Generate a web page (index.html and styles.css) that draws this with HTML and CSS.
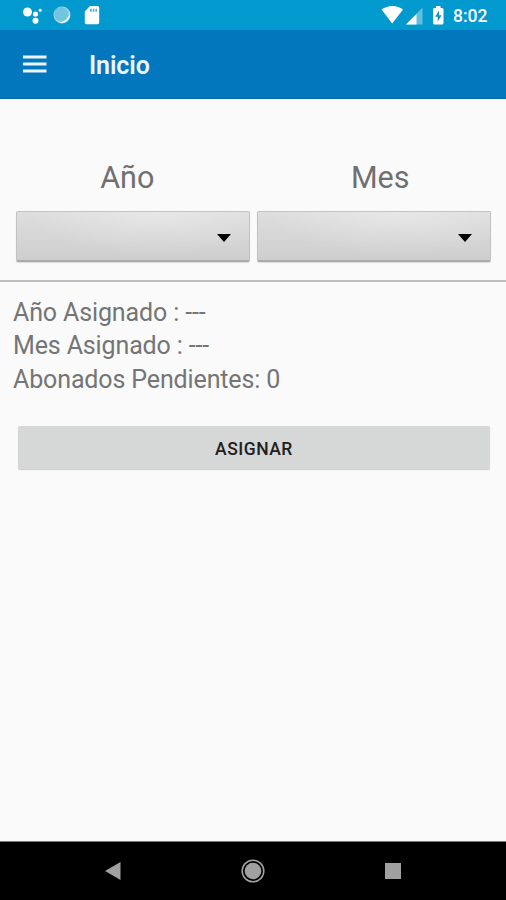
FILE: index.html
```html
<!DOCTYPE html>
<html lang="es">
<head>
<meta charset="utf-8">
<title>Inicio</title>
<link rel="stylesheet" href="styles.css">
</head>
<body>
<div class="screen">
  <header class="status">
    <svg class="status-left" width="84" height="30" viewBox="0 0 84 30" fill="#fff">
      <circle cx="7.500" cy="12" r="4.500"/><circle cx="15.500" cy="14" r="2.600"/><circle cx="20.200" cy="10.200" r="1.500"/><circle cx="15.500" cy="20.700" r="3"/>
      <circle cx="42" cy="15" r="8.500" fill="#a3d9eb"/>
      <circle cx="41.300" cy="14.200" r="7.200" fill="#72c5e0"/>
      <path d="M49.800 14a8.500 8.500 0 0 1-11 8.800Q47 21.500 49.800 14z" fill="#f0fafd"/>
      <path d="M70 6H77.500a1.700 1.700 0 0 1 1.700 1.700V22.500a1.700 1.700 0 0 1-1.700 1.700H66.500a1.700 1.700 0 0 1-1.700-1.700V11.500z"/>
      <path d="M70 8.800h1.700v3H70zM72.700 8.800h1.700v3h-1.700zM75.400 8.800h1.700v3h-1.700z" fill="#4ab5d8"/>
    </svg>
    <div class="status-right">
      <svg width="64" height="30" viewBox="0 0 64 30" fill="#fff">
        <path d="M.5 9.500C7 4.700 16 4.700 22 9.500L11.200 23.500z"/>
        <path d="M41.500 7.500V24.500H25z" fill="#5fbfdf"/><path d="M35.500 14V24.500H25z"/>
        <path d="M55 6h4.500v2H61a1.500 1.500 0 0 1 1.500 1.500V23a1.500 1.500 0 0 1-1.500 1.500h-7.500A1.500 1.500 0 0 1 52 23V9.500A1.500 1.500 0 0 1 53.500 8H55z"/>
        <path d="M58 10.500L54.200 16.700h2.500V21.500l3.900-6.200H58z" fill="#168fbd"/>
      </svg>
      <span class="clock">8:02</span>
    </div>
  </header>
  <nav class="appbar">
    <svg width="24" height="18" viewBox="0 0 24 18" fill="#eaf5fc"><path d="M0 .5h23.500v3H0zM0 7.500h23.500v3H0zM0 14.500h23.500v3H0z"/></svg>
    <h1 class="title">Inicio</h1>
  </nav>
  <main class="content">
    <section class="filters">
      <div class="field"><span class="label">Año</span><div class="spinner"><svg width="14" height="8" viewBox="0 0 14 8"><path d="M0 0h14L7 8z"/></svg></div></div>
      <div class="field"><span class="label">Mes</span><div class="spinner"><svg width="14" height="8" viewBox="0 0 14 8"><path d="M0 0h14L7 8z"/></svg></div></div>
    </section>
    <section class="summary">
      <p class="line">Año Asignado : ---</p>
      <p class="line">Mes Asignado : ---</p>
      <p class="line">Abonados Pendientes: 0</p>
    </section>
    <button class="assign">ASIGNAR</button>
  </main>
  <footer class="navbar">
    <svg width="16" height="18" viewBox="0 0 16 18"><path d="M0 9L15.500 0V18z" fill="#a0a0a0"/></svg>
    <svg width="24" height="24" viewBox="0 0 24 24"><circle cx="12" cy="12" r="10.800" fill="none" stroke="#a0a0a0" stroke-width="1.500"/><circle cx="12" cy="12" r="8.300" fill="#a0a0a0"/></svg>
    <svg width="16" height="16" viewBox="0 0 16 16"><path d="M0 0h16v16H0z" fill="#a0a0a0"/></svg>
  </footer>
</div>
</body>
</html>
```
FILE: styles.css
```css
* { box-sizing: border-box; }
body { margin: 0; font-family: Roboto, "Liberation Sans", sans-serif; }
svg { display: block; flex: none; }
.screen { display: flex; flex-direction: column; width: 506px; height: 900px; background: #fafafa; }
.status { display: flex; justify-content: space-between; height: 30px; padding: 0 18px 0 20px; background: #0299ce; }
.status-right { display: flex; gap: 8px; margin-right: -1px; }
.clock { width: 36px; font-size: 17.500px; line-height: 32px; font-weight: 500; color: #fff; white-space: nowrap; }
.appbar { display: flex; align-items: center; gap: 42px; height: 69px; padding: 0 23px; background: #0277bd; border-bottom: 1px solid #0967aa; }
.title { margin: 4px 0 0; font-size: 25px; line-height: 30px; font-weight: 600; letter-spacing: -.1px; color: #eaf5fc; }
.content { flex: 1; }
.filters { display: flex; gap: 7px; height: 183px; padding: 59px 15px 0; border-bottom: 2px solid #bdbdbd; }
.field { flex: 1; }
.label { display: block; height: 53px; padding-right: 10px; font-size: 30.500px; line-height: 40px; font-weight: 400; text-align: center; color: #707070; }
.field + .field .label { padding: 0 0 0 13px; }
.spinner { display: flex; align-items: center; justify-content: flex-end; height: 51px; margin-left: 1px; padding: 3px 18px 0 0; border: 1px solid #c2c2c2; border-bottom: 2px solid #aaa; border-radius: 2px; background: radial-gradient(ellipse at 60% 0, rgba(255,255,255,.3), transparent 65%), linear-gradient(#dedede, #cecece); box-shadow: 0 1px 1px #ddd; }
.field + .field .spinner { margin-left: 0; }
.summary { padding: 14px 13px 0; }
.line { margin: 0; font-size: 25px; line-height: 33.300px; font-weight: 400; letter-spacing: -.13px; color: #757575; }
.assign { display: block; width: 472px; height: 43px; margin: 30px 0 0 18px; padding: 3px 0 0; border: 0; border-radius: 2px; background: #d6d7d7; box-shadow: 0 1px 1px #ccc; font-family: inherit; font-size: 17.500px; font-weight: 500; letter-spacing: .5px; color: #202020; }
.navbar { display: flex; align-items: center; justify-content: space-between; height: 59px; padding: 0 105px 1px; background: #000; border-top: 1px solid #777; }
```
